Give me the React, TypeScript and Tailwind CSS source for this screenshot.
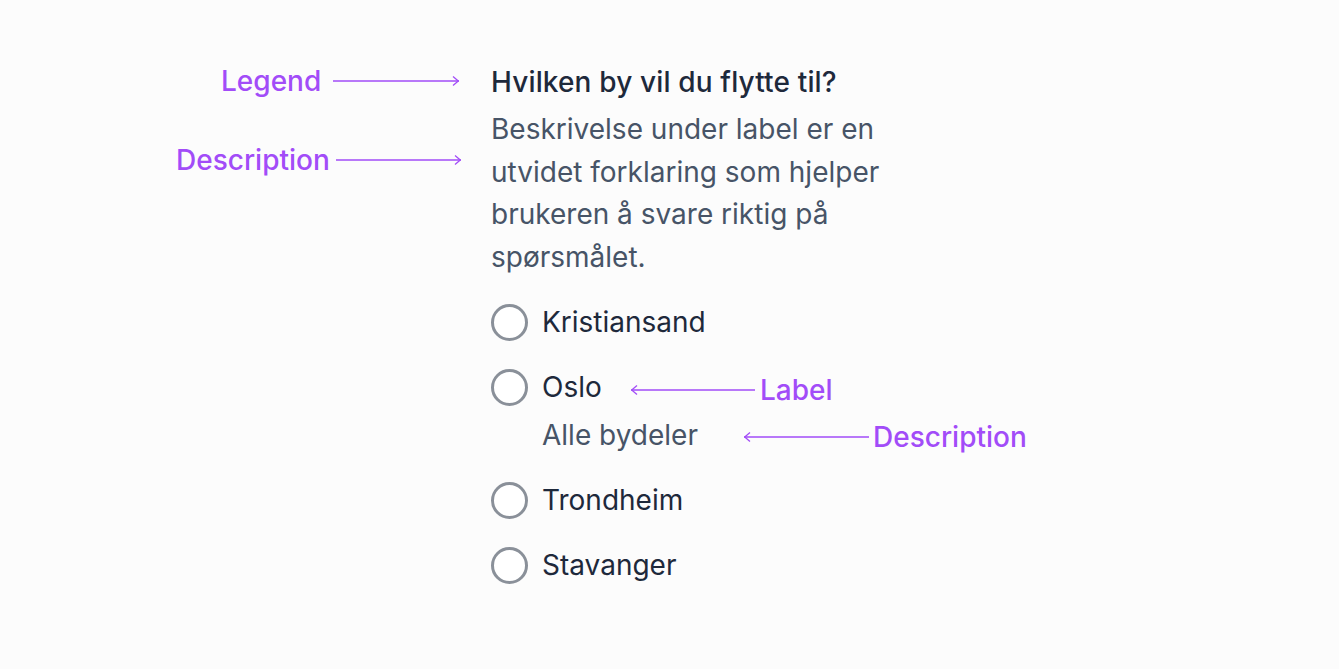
import React from 'react';

const font = { fontFamily: 'Inter, "Noto Sans", sans-serif' };

function Arrow({ width, dir }: { width: number; dir: 'left' | 'right' }) {
  return (
    <svg width={width} height={10} viewBox={`0 0 ${width} 10`} className="text-[#a24cf8]">
      <line x1={0} y1={5} x2={width} y2={5} stroke="currentColor" strokeWidth={1.3} />
      {dir === 'right' ? (
        <path d={`M${width - 6} 0.5 L${width - 0.7} 5 L${width - 6} 9.5`} fill="none" stroke="currentColor" strokeWidth={1.3} />
      ) : (
        <path d="M6 0.5 L0.7 5 L6 9.5" fill="none" stroke="currentColor" strokeWidth={1.3} />
      )}
    </svg>
  );
}

function Radio({ label, description }: { label: string; description?: string }) {
  return (
    <div className="flex items-start gap-[14px]">
      <span className="mt-[1px] h-[37px] w-[37px] shrink-0 rounded-full border-[3px] border-[#8a9099] bg-white" />
      <div className="flex flex-col">
        <span className="text-[28px] leading-[38px] text-[#1e293b]">{label}</span>
        {description && <span className="mt-[10px] text-[28px] leading-[38px] text-[#475467]">{description}</span>}
      </div>
    </div>
  );
}

export default function App() {
  return (
    <div className="relative h-[669px] w-full bg-[#fcfcfc]" style={font}>
      {/* annotations */}
      <div className="absolute left-[221px] top-[61px] flex items-center gap-[12px] text-[28px] font-medium leading-[40px] text-[#a24cf8]">
        <span>Legend</span>
        <Arrow width={126} dir="right" />
      </div>
      <div className="absolute left-[176px] top-[140px] flex items-center gap-[6px] text-[28px] font-medium leading-[40px] text-[#a24cf8]">
        <span>Description</span>
        <Arrow width={125} dir="right" />
      </div>
      <div className="absolute left-[631px] top-[370px] flex items-center gap-[5px] text-[28px] font-medium leading-[40px] text-[#a24cf8]">
        <Arrow width={124} dir="left" />
        <span>Label</span>
      </div>
      <div className="absolute left-[744px] top-[417px] flex items-center gap-[4px] text-[28px] font-medium leading-[40px] text-[#a24cf8]">
        <Arrow width={125} dir="left" />
        <span>Description</span>
      </div>

      {/* form */}
      <fieldset className="flex flex-col pl-[491px] pt-[63px]">
        <legend className="contents">
          <span className="block text-[28px] font-medium leading-[38px] tracking-[0.15px] text-[#1e293b]">Hvilken by vil du flytte til?</span>
        </legend>
        <p className="mt-[7px] w-[420px] text-[28px] leading-[42.5px] text-[#475467]">
          Beskrivelse under label er en utvidet forklaring som hjelper brukeren å svare riktig på spørsmålet.
        </p>
        <div className="mt-[25px] flex flex-col gap-[27px]">
          <Radio label="Kristiansand" />
          <Radio label="Oslo" description="Alle bydeler" />
          <Radio label="Trondheim" />
          <Radio label="Stavanger" />
        </div>
      </fieldset>
    </div>
  );
}
